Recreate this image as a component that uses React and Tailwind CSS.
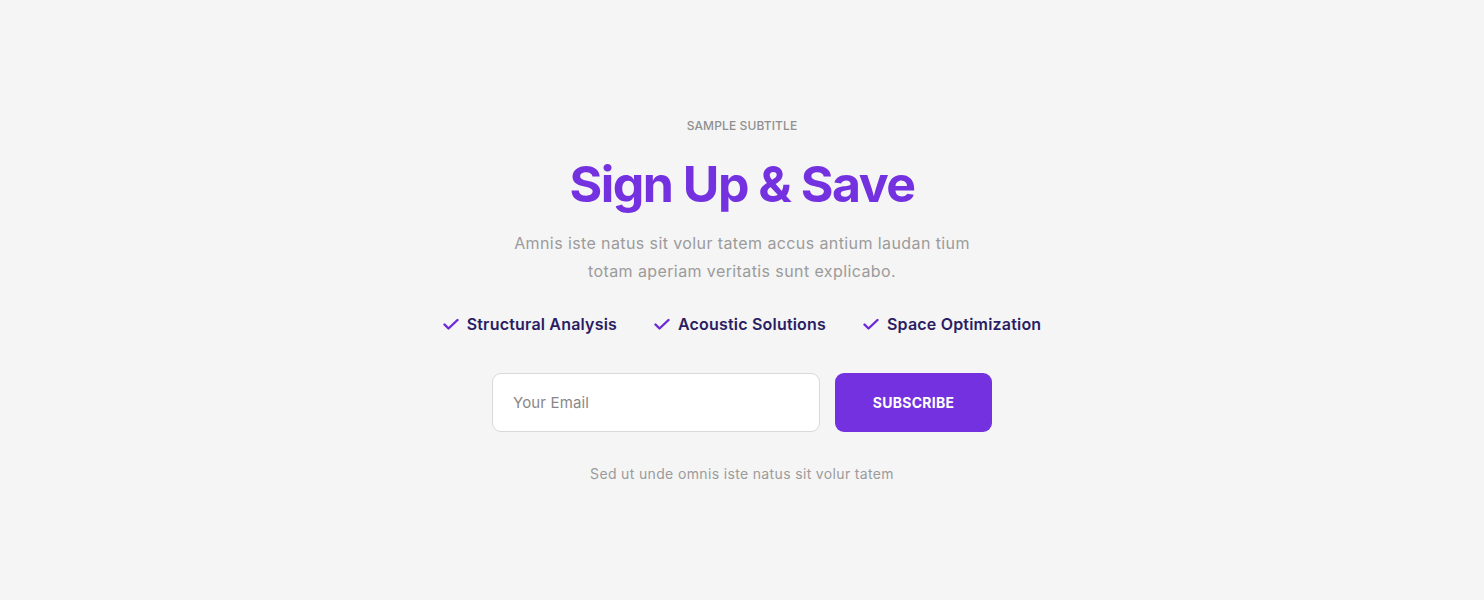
import React from "react";

function Check() {
  return (
    <svg width="17" height="16" viewBox="0 0 17 16" fill="none" className="shrink-0">
      <path d="M1.5 8.5 L5.5 12.5 L14.5 4" stroke="#6d28d9" strokeWidth="2.4" strokeLinecap="round" strokeLinejoin="round" />
    </svg>
  );
}

export default function App() {
  const features = ["Structural Analysis", "Acoustic Solutions", "Space Optimization"];
  return (
    <div className="min-h-[600px] w-full bg-[#f5f5f5] flex flex-col items-center pt-[118px]" style={{ fontFamily: "Inter, 'Noto Sans', sans-serif" }}>
      <div className="text-[12px] leading-[16px] uppercase text-[#8f8f8f] font-medium tracking-[0.01em]">Sample Subtitle</div>
      <h1 className="mt-[20px] text-[50px] leading-[60px] font-bold text-[#7431e0] tracking-[-0.03em]">Sign Up &amp; Save</h1>
      <p className="mt-[15px] w-[480px] text-center text-[16px] leading-[28px] text-[#9b9b9b] tracking-[0.025em]">
        Amnis iste natus sit volur tatem accus antium laudan tium totam aperiam veritatis sunt explicabo.
      </p>
      <div className="mt-[27px] flex items-center gap-[37px]">
        {features.map((f) => (
          <div key={f} className="flex items-center gap-[7px]">
            <Check />
            <span className="text-[16px] leading-[24px] font-semibold text-[#2b1d63] tracking-[0.012em]">{f}</span>
          </div>
        ))}
      </div>
      <div className="mt-[37px] flex gap-[15px]">
        <input
          placeholder="Your Email"
          className="w-[328px] h-[59px] rounded-[9px] border border-[#d9d9d9] bg-white px-[20px] text-[15px] text-[#333] placeholder-[#888] outline-none tracking-[0.01em]"
        />
        <button className="w-[157px] h-[59px] rounded-[9px] bg-[#7431e0] text-white text-[14px] font-bold uppercase tracking-[0.02em]">
          Subscribe
        </button>
      </div>
      <div className="mt-[32px] text-[14px] leading-[20px] text-[#9b9b9b] tracking-[0.025em]">Sed ut unde omnis iste natus sit volur tatem</div>
    </div>
  );
}
